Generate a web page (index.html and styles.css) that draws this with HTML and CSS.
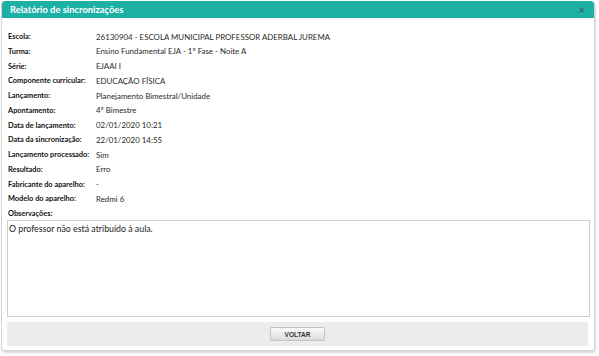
FILE: index.html
```html
<!DOCTYPE html>
<html lang="pt-BR">
<head>
  <meta charset="UTF-8" />
  <title>Relatório de sincronizações</title>
  <link rel="stylesheet" href="styles.css">
</head>
<body>

  <div class="dialog">
    <div class="dialog-header">
      <span class="dialog-title">Relatório de sincronizações</span>
      <span class="dialog-close">&times;</span>
    </div>

    <div class="dialog-body">
      <div class="info">
        <div class="label">Escola:</div>
        <div class="value">26130904 - ESCOLA MUNICIPAL PROFESSOR ADERBAL JUREMA</div>
        <div class="label">Turma:</div>
        <div class="value">Ensino Fundamental EJA - 1º Fase - Noite A</div>
        <div class="label">Série:</div>
        <div class="value">EJAAI I</div>
        <div class="label">Componente curricular:</div>
        <div class="value">EDUCAÇÃO FÍSICA</div>
        <div class="label">Lançamento:</div>
        <div class="value">Planejamento Bimestral/Unidade</div>
        <div class="label">Apontamento:</div>
        <div class="value">4º Bimestre</div>
        <div class="label">Data de lançamento:</div>
        <div class="value">02/01/2020 10:21</div>
        <div class="label">Data da sincronização:</div>
        <div class="value">22/01/2020 14:55</div>
        <div class="label">Lançamento processado:</div>
        <div class="value">Sim</div>
        <div class="label">Resultado:</div>
        <div class="value">Erro</div>
        <div class="label">Fabricante do aparelho:</div>
        <div class="value">-</div>
        <div class="label">Modelo do aparelho:</div>
        <div class="value">Redmi 6</div>
        <div class="label">Observações:</div>
        <div class="value"></div>
      </div>

      <div class="obs">O professor não está atribuído à aula.</div>

      <div class="dialog-footer">
        <button class="btn">VOLTAR</button>
      </div>
    </div>
  </div>

</body>
</html>
```

FILE: styles.css
```css
html, body {
  margin: 0;
  height: 100%;
}

body {
  background-color: #ffffff;
  font-family: 'Lato', sans-serif;
  color: #222;
}

.dialog {
  margin: 1px 0 0 1px;
  width: 592px;
  height: 349px;
  border: 1px solid #d4d4d4;
  border-top: none;
  border-radius: 3px;
  box-shadow: 1px 2px 2px rgba(0, 0, 0, 0.15);
  display: flex;
  flex-direction: column;
  overflow: hidden;
}

.dialog-header {
  background-color: #1db1a5;
  height: 21px;
  padding: 0 8px;
  display: flex;
  align-items: center;
  justify-content: space-between;
  border-radius: 3px 3px 0 0;
}

.dialog-title {
  color: white;
  font-weight: bold;
  font-size: 9.4px;
}

.dialog-close {
  color: #2d6b66;
  font-size: 11px;
  font-weight: bold;
  line-height: 1;
  margin-right: 1px;
}

.dialog-body {
  flex: 1;
  padding: 11px 4px 4px 5px;
  display: flex;
  flex-direction: column;
}

.info {
  display: grid;
  grid-template-columns: 88px 1fr;
  grid-auto-rows: 14.75px;
  align-items: center;
  font-size: 7.9px;
  padding-left: 1px;
  white-space: nowrap;
}

.label {
  font-weight: bold;
  font-size: 7.4px;
  color: #111;
}

.value {
  color: #2a2a2a;
}

.obs {
  margin-top: -1px;
  height: 91px;
  border: 1px solid #cfcfcf;
  padding: 2px 1px;
  font-size: 8.8px;
  color: #222;
}

.dialog-footer {
  margin-top: 5px;
  height: 24px;
  background-color: #ececec;
  display: flex;
  align-items: center;
  justify-content: center;
  margin-right: 2px;
}

.btn {
  width: 55px;
  height: 14px;
  padding: 0;
  border: 1px solid #c4c4c4;
  border-radius: 1px;
  background: linear-gradient(#fafafa, #dcdcdc);
  font-family: 'Liberation Sans', Arial, sans-serif;
  font-size: 6.5px;
  font-weight: bold;
  color: #333;
}
```
